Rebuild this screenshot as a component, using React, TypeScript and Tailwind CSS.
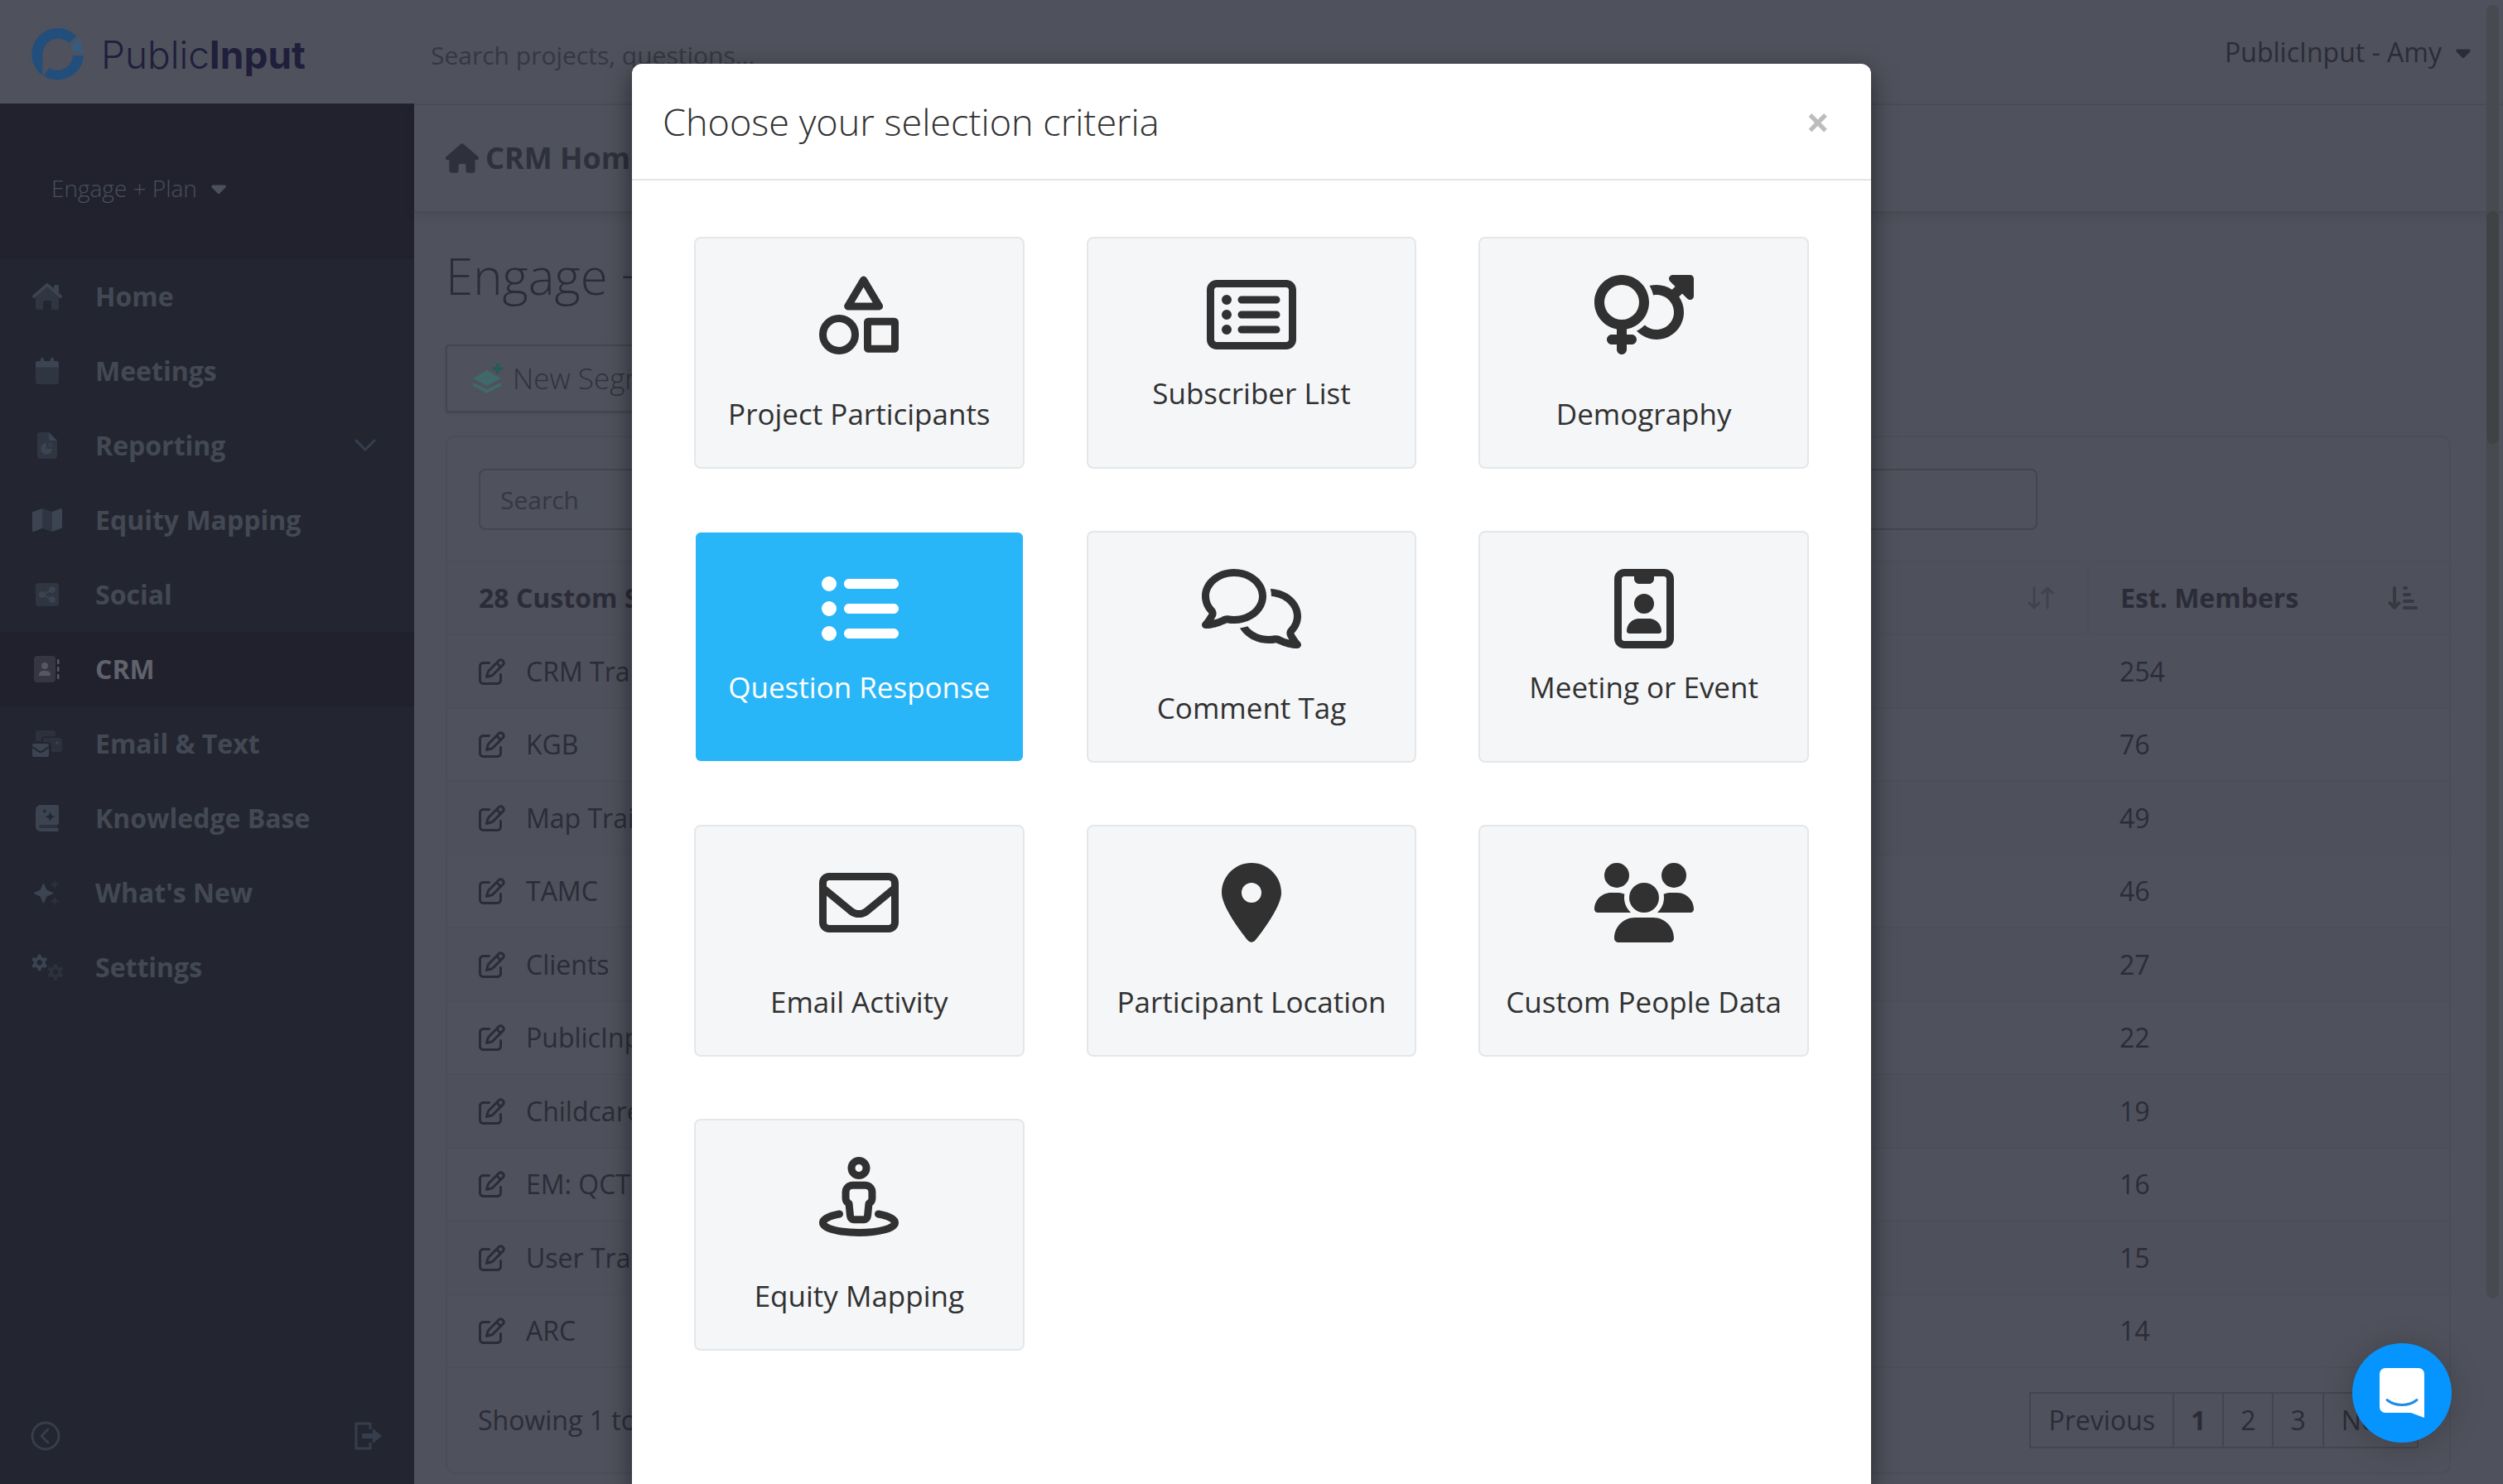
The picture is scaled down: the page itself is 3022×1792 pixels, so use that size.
import type { ReactNode } from "react";
import clsx from "clsx";
import {
    FaArrowDownShortWide,
    FaCaretDown,
    FaHouse,
    FaListUl,
    FaLocationDot,
    FaRegComments,
    FaRegEnvelope,
    FaRegIdBadge,
    FaRegPenToSquare,
    FaRegRectangleList,
    FaUsers,
    FaVenusMars,
} from "react-icons/fa6";

// two-tone icons, the muted tone is the half opacity part
function Duo({ width, children }: { width: number; children: ReactNode }) {
    return (
        <svg viewBox={`0 0 ${width} 512`} height={32} fill="currentColor" aria-hidden="true">
            {children}
        </svg>
    );
}

const HomeIcon = (
    <Duo width={576}>
        <path opacity=".5" d="M64 270 288 74l224 196v210a32 32 0 0 1-32 32H368V368a32 32 0 0 0-32-32h-96a32 32 0 0 0-32 32v144H96a32 32 0 0 1-32-32z" />
        <path d="M267 8a32 32 0 0 1 42 0l107 93V64a32 32 0 0 1 32-32h32a32 32 0 0 1 32 32v121l53 47a32 32 0 0 1-42 48L288 75 53 280a32 32 0 0 1-42-48z" />
    </Duo>
);

const MeetingsIcon = (
    <Duo width={448}>
        <path opacity=".5" d="M0 176h448v288a48 48 0 0 1-48 48H48a48 48 0 0 1-48-48z" />
        <path d="M96 32a32 32 0 0 1 64 0v32h128V32a32 32 0 0 1 64 0v32h48a48 48 0 0 1 48 48v72H0v-72a48 48 0 0 1 48-48h48z" />
    </Duo>
);

const ReportingIcon = (
    <Duo width={384}>
        <path opacity=".5" d="M64 0h160v128a32 32 0 0 0 32 32h128v288a64 64 0 0 1-64 64H64a64 64 0 0 1-64-64V64A64 64 0 0 1 64 0z" />
        <path d="M224 0 384 160H256a32 32 0 0 1-32-32zM176 208v112h112a112 112 0 1 1-112-112z" />
        <path opacity=".5" d="M208 192a96 96 0 0 1 96 96h-96z" />
    </Duo>
);

const MapIcon = (
    <Duo width={576}>
        <path opacity=".5" d="m192 32 192 64v384l-192-64z" />
        <path d="M0 117a24 24 0 0 1 15-22L192 32v384L32 479a24 24 0 0 1-32-22zM384 96l160-63a24 24 0 0 1 32 22v340a24 24 0 0 1-15 22l-177 63z" />
    </Duo>
);

const SocialIcon = (
    <Duo width={448}>
        <rect opacity=".5" y="32" width="448" height="448" rx="64" />
        <path d="M320 96a64 64 0 1 1-48 106l-82 41a64 64 0 0 1 0 26l82 41a64 64 0 1 1-14 29l-83-42a64 64 0 1 1 0-82l83-42A64 64 0 0 1 320 96z" />
    </Duo>
);

const CrmIcon = (
    <Duo width={512}>
        <rect opacity=".4" width="416" height="512" rx="64" />
        <circle cx="208" cy="192" r="64" />
        <path d="M96 384a80 80 0 0 1 80-96h64a80 80 0 0 1 80 96z" />
        <rect x="448" y="64" width="40" height="96" rx="16" />
        <rect x="448" y="208" width="40" height="96" rx="16" />
        <rect x="448" y="352" width="40" height="96" rx="16" />
    </Duo>
);

const EmailIcon = (
    <Duo width={576}>
        <path opacity=".4" d="M96 0h320a32 32 0 0 1 32 32v80H240a64 64 0 0 0-64 64v32H64V32A32 32 0 0 1 96 0zM240 144h288a48 48 0 0 1 48 48v176a48 48 0 0 1-48 48H368V288a64 64 0 0 0-64-64h-96v-48a32 32 0 0 1 32-32z" />
        <circle cx="480" cy="240" r="28" />
        <path d="M0 288a32 32 0 0 1 32-32h256a32 32 0 0 1 32 32v14L178 395a32 32 0 0 1-36 0L0 302zM0 340l124 82a64 64 0 0 0 72 0l124-82v140a32 32 0 0 1-32 32H32a32 32 0 0 1-32-32z" />
    </Duo>
);

const KnowledgeIcon = (
    <Duo width={448}>
        <path opacity=".4" d="M64 384h352v64H64z" />
        <path fillRule="evenodd" d="M96 0h320a32 32 0 0 1 32 32v320a32 32 0 0 1-32 32H96a32 32 0 0 0 0 64h320a32 32 0 0 1 0 64H96a96 96 0 0 1-96-96V96A96 96 0 0 1 96 0zm184 128-26 70-70 26 70 26 26 70 26-70 70-26-70-26zM176 72l-14 34-34 14 34 14 14 34 14-34 34-14-34-14z" />
    </Duo>
);

const WhatsNewIcon = (
    <Duo width={512}>
        <path d="m192 80 55 121 121 55a12 12 0 0 1 0 18l-121 55-55 121a12 12 0 0 1-18 0l-55-121L0 274a12 12 0 0 1 0-18l121-55 53-121a12 12 0 0 1 18 0z" />
        <path opacity=".4" d="m400 0 25 71 71 25-71 25-25 71-25-71-71-25 71-25zM400 320l25 71 71 25-71 25-25 71-25-71-71-25 71-25z" />
    </Duo>
);

const gear = "M-28-150h56l10 48 36 21 47-16 28 49-37 32v42l37 32-28 49-47-16-36 21-10 48h-56l-10-48-36-21-47 16-28-49 37-32v-42l-37-32 28-49 47 16 36-21zM0-50a54 54 0 1 0 .1 0z";

const SettingsIcon = (
    <Duo width={640}>
        <path fillRule="evenodd" transform="translate(170 160)" d={gear} />
        <path opacity=".4" fillRule="evenodd" transform="translate(480 345)" d={gear} />
    </Duo>
);

const navItems = [
    { label: "Home", icon: HomeIcon },
    { label: "Meetings", icon: MeetingsIcon },
    { label: "Reporting", icon: ReportingIcon, expandable: true },
    { label: "Equity Mapping", icon: MapIcon },
    { label: "Social", icon: SocialIcon },
    { label: "CRM", icon: CrmIcon, active: true },
    { label: "Email & Text", icon: EmailIcon },
    { label: "Knowledge Base", icon: KnowledgeIcon },
    { label: "What's New", icon: WhatsNewIcon },
    { label: "Settings", icon: SettingsIcon },
];

const segments = [
    { name: "CRM Training", members: 254 },
    { name: "KGB", members: 76 },
    { name: "Map Training", members: 49 },
    { name: "TAMC", members: 46 },
    { name: "Clients", members: 27 },
    { name: "PublicInput", members: 22 },
    { name: "Childcare", members: 19 },
    { name: "EM: QCT", members: 16 },
    { name: "User Training", members: 15 },
    { name: "ARC", members: 14 },
];

function ShapesIcon() {
    return (
        <svg viewBox="0 0 512 512" width={96} height={96} fill="none" stroke="currentColor" strokeWidth="48" strokeLinejoin="round" aria-hidden="true">
            <path d="M286 32 185 202h202z" />
            <circle cx="128" cy="384" r="104" />
            <rect x="312" y="300" width="176" height="176" rx="4" />
        </svg>
    );
}

function StreetViewIcon() {
    return (
        <svg viewBox="0 0 512 512" width={96} height={96} fill="none" stroke="currentColor" strokeWidth="48" strokeLinecap="round" strokeLinejoin="round" aria-hidden="true">
            <circle cx="256" cy="72" r="48" />
            <path d="M216 182h80c25 0 45 20 45 45v40c0 15-8 27-21 33l-8 80c-1 13-12 24-25 24h-62c-13 0-24-11-25-24l-8-80c-13-6-21-18-21-33v-40c0-25 20-45 45-45z" />
            <path d="M131 368C66 380 24 400 24 424c0 36 104 64 232 64s232-28 232-64c0-24-42-44-107-56" />
        </svg>
    );
}

const criteria = [
    { label: "Project Participants", icon: <ShapesIcon />, spaced: true },
    { label: "Subscriber List", icon: <FaRegRectangleList className="h-24 w-27" /> },
    { label: "Demography", icon: <FaVenusMars className="h-24 w-30" />, spaced: true },
    { label: "Question Response", icon: <FaListUl className="size-24" />, selected: true },
    { label: "Comment Tag", icon: <FaRegComments className="h-24 w-30" />, spaced: true },
    { label: "Meeting or Event", icon: <FaRegIdBadge className="size-24" /> },
    { label: "Email Activity", icon: <FaRegEnvelope className="size-24" />, spaced: true },
    { label: "Participant Location", icon: <FaLocationDot className="size-24" />, spaced: true },
    { label: "Custom People Data", icon: <FaUsers className="h-24 w-30" />, spaced: true },
    { label: "Equity Mapping", icon: <StreetViewIcon />, spaced: true },
];

function Logo() {
    return (
        <a href="#" className="flex w-[500px] items-center gap-[21px] pt-1.5 pl-[38px]">
            <svg viewBox="0 0 63 63" width={63} height={63} aria-hidden="true">
                <path fill="#224e7c" d="M54.300 9.500 45.600 18A19 19 0 0 0 13.300 31.500V57A31.500 31.500 0 1 1 54.300 9.500z" />
                <path fill="#224e7c" d="M63 33.200A31.500 31.500 0 0 1 14.600 57.500l7-9.700 3.400 2A19 19 0 0 0 50 33.200z" />
                <path fill="#3a5a7c" d="M56.300 12A31.500 31.500 0 0 1 63 29.800H50a19 19 0 0 0-2.400-10z" />
            </svg>
            <span className="font-[Inter,sans-serif] text-[46px] leading-none text-[#1f1f3b]">
                <span className="font-light">Public</span>
                <span className="font-bold">Input</span>
            </span>
        </a>
    );
}

function TopBar() {
    return (
        <header className="flex h-[127px] shrink-0 items-center border-b-2 border-[#4a4c57]">
            <Logo />
            <input
                type="text"
                aria-label="Search projects"
                placeholder="Search projects, questions..."
                className="mt-2 ml-5 w-[700px] bg-transparent text-[30px] outline-none placeholder:text-[#363743]"
            />
            <button type="button" className="mr-[34px] ml-auto flex items-center gap-3 text-[32px]">
                PublicInput - Amy
                <FaCaretDown size={28} />
            </button>
        </header>
    );
}

function Sidebar() {
    return (
        <aside className="-mt-0.5 flex w-[500px] shrink-0 flex-col bg-[#232631]">
            <div className="flex h-[188px] items-center bg-[#21222e] pt-4 pl-[62px]">
                <button type="button" className="flex items-center gap-3 text-[28px] font-light text-[#4a505c]">
                    Engage + Plan
                    <FaCaretDown size={28} />
                </button>
            </div>
            <nav>
                {navItems.map((item) => (
                    <a
                        key={item.label}
                        href="#"
                        className={clsx(
                            "flex h-[90px] items-center gap-[38px] pr-[46px] pl-[37px] text-[32px] font-bold",
                            item.active ? "bg-[#20212d] text-[#60626b]" : "text-[#434954]"
                        )}
                    >
                        <span className={clsx("flex w-10 justify-center", item.active ? "text-[#555761]" : "text-[#3c4451]")}>
                            {item.icon}
                        </span>
                        {item.label}
                        {item.expandable && (
                            <svg viewBox="0 0 26 16" width={26} height={16} className="ml-auto text-[#363f50]" fill="none" stroke="currentColor" strokeWidth="3" strokeLinecap="round" strokeLinejoin="round" aria-hidden="true">
                                <path d="m2 2 11 11L24 2" />
                            </svg>
                        )}
                    </a>
                ))}
            </nav>
            <div className="mt-auto flex justify-between pr-[39px] pb-10 pl-[37px] text-[#363d4c]">
                <button type="button" aria-label="Collapse menu">
                    <svg viewBox="0 0 36 36" width={36} height={36} fill="none" stroke="currentColor" strokeWidth="3" strokeLinecap="round" strokeLinejoin="round" aria-hidden="true">
                        <circle cx="18" cy="18" r="16" />
                        <path d="m21 10-8 8 8 8" />
                    </svg>
                </button>
                <button type="button" aria-label="Log out">
                    <svg viewBox="0 0 34 34" width={34} height={34} fill="none" stroke="currentColor" strokeWidth="3" strokeLinejoin="round" aria-hidden="true">
                        <path d="M20 9V2H3v30h17v-7" />
                        <path d="M10 14h13V8l11 9-11 9v-6H10z" fill="currentColor" stroke="none" />
                    </svg>
                </button>
            </div>
        </aside>
    );
}

function SegmentTable() {
    return (
        <table className="w-full table-fixed border-collapse text-left">
            <thead>
                <tr className="h-[88px] border-y-2 border-[#4c4e59] bg-[#4e505b]">
                    <th className="border-r-2 border-[#4c4e59] pr-10 pl-[38px] font-bold">
                        <div className="flex items-center justify-between">
                            28 Custom Segments
                            <svg viewBox="0 0 32 28" width={32} height={28} className="text-[#40424d]" fill="none" stroke="currentColor" strokeWidth="3" strokeLinecap="round" strokeLinejoin="round" aria-hidden="true">
                                <path d="M8 2v24M2 20l6 6 6-6M24 26V2M18 8l6-6 6 6" />
                            </svg>
                        </div>
                    </th>
                    <th className="w-[436px] px-[38px] font-bold">
                        <div className="flex items-center justify-between">
                            Est. Members
                            <FaArrowDownShortWide size={36} className="text-[#363842]" />
                        </div>
                    </th>
                </tr>
            </thead>
            <tbody>
                {segments.map((segment) => (
                    <tr key={segment.name} className="border-b-2 border-[#4c4e59] odd:h-[89px] odd:bg-[#4e505b] even:h-[88px]">
                        <td className="pl-[38px]">
                            <a href="#" className="flex items-center gap-[25px]">
                                <FaRegPenToSquare size={32} />
                                {segment.name}
                            </a>
                        </td>
                        <td className="pl-[38px]">{segment.members}</td>
                    </tr>
                ))}
            </tbody>
        </table>
    );
}

function Pagination() {
    return (
        <div className="flex divide-x-2 divide-[#43454f] border-2 border-[#43454f]">
            <button type="button" className="h-16 px-[21px]">Previous</button>
            <button type="button" className="h-16 px-[20px] font-bold">1</button>
            <button type="button" className="h-16 px-[20px]">2</button>
            <button type="button" className="h-16 px-[20px]">3</button>
            <button type="button" className="h-16 px-[21px]">Next</button>
        </div>
    );
}

function Content() {
    return (
        <main className="min-w-0 flex-1">
            <div className="flex h-[130px] items-center gap-2 border-b-2 border-[#484a54] pl-[38px] text-[36px] font-bold text-[#2e303b] shadow-[0_4px_12px_rgba(0,0,0,0.08)]">
                <FaHouse size={40} />
                CRM Home
            </div>
            <div className="pr-[63px] pl-[38px]">
                <h1 className="mt-[34px] text-[60px] leading-[84px] font-light">Engage + Plan</h1>
                <button type="button" className="mt-[41px] flex h-[82px] items-center gap-3 rounded-sm border-2 border-[#43454f] px-[31px] text-[35px] font-light text-[#30323d] shadow-sm">
                    <svg viewBox="0 0 36 36" width={36} height={36} aria-hidden="true">
                        <path fill="#41686a" d="m17 8 17 10-17 9-17-9z" />
                        <path fill="#41686a" d="m0 23 17 8 17-8v4l-17 9-17-9z" />
                        <path fill="#265a5a" d="M28 0h4v4h4v4h-4v4h-4V8h-4V4h4z" />
                    </svg>
                    New Segment
                </button>
                <section className="mt-[28px] rounded-xl border-2 border-[#4b4d58]">
                    <div className="px-[38px] pt-[38px] pb-[37px]">
                        <input
                            type="text"
                            aria-label="Search segments"
                            placeholder="Search"
                            className="h-[74px] w-[1882px] max-w-full rounded-lg border-2 border-[#43454f] bg-transparent px-6 text-[30px] outline-none placeholder:text-[#363743]"
                        />
                    </div>
                    <SegmentTable />
                    <div className="flex h-[126px] items-center justify-between px-[37px]">
                        <span>Showing 1 to 10 of 28</span>
                        <Pagination />
                    </div>
                </section>
            </div>
        </main>
    );
}

function CriteriaModal() {
    return (
        <div role="dialog" aria-labelledby="criteria-title" className="mt-[77px] w-full max-w-[1496px] rounded-t-xl bg-white text-[#313131] shadow-[0_10px_30px_rgba(0,0,0,0.5)]">
            <div className="flex h-[141px] items-center justify-between border-b-2 border-[#e4e5e6] pr-[50px] pl-[37px]">
                <h2 id="criteria-title" className="text-[45px] font-light">Choose your selection criteria</h2>
                <button type="button" aria-label="Close" className="text-[50px] leading-none font-bold text-[#bcbcbc]">×</button>
            </div>
            <div className="grid grid-cols-3 gap-[75px] px-[75px] pt-[68px] pb-[75px]">
                {criteria.map((item) => (
                    <button
                        key={item.label}
                        type="button"
                        className={clsx(
                            "flex h-[280px] flex-col items-center rounded-lg border-2 pt-11 text-[35px] leading-[50px] whitespace-nowrap",
                            item.selected ? "border-white bg-[#29b6f8] text-white" : "border-[#e4e7e9] bg-[#f4f6f8]",
                            item.spaced ? "gap-[47px]" : "gap-[22px]"
                        )}
                    >
                        {item.icon}
                        {item.label}
                    </button>
                ))}
            </div>
        </div>
    );
}

function ChatLauncher() {
    return (
        <button type="button" aria-label="Open chat" className="absolute right-[62px] bottom-[50px] flex size-[120px] items-center justify-center rounded-full bg-[#0695ff] shadow-[0_4px_40px_rgba(0,0,0,0.2)]">
            <svg viewBox="0 0 54 60" width={54} height={60} aria-hidden="true">
                <path fill="#fff" d="M7 0h40a7 7 0 0 1 7 7v53l-16-6H7a7 7 0 0 1-7-7V7a7 7 0 0 1 7-7z" />
                <path fill="none" stroke="#1f8ee8" strokeWidth="3" strokeLinecap="round" d="M9 38.500c10 8 26 8 36 0" />
            </svg>
        </button>
    );
}

export default function App() {
    return (
        <div className="relative flex h-screen flex-col overflow-hidden bg-[#4f515c] font-['Open_Sans',sans-serif] text-[32px] text-[#2b2c38]">
            <TopBar />
            <div className="flex min-h-0 flex-1">
                <Sidebar />
                <Content />
            </div>
            <div className="absolute top-1.5 right-[5px] h-[1562px] w-[15px] rounded-full bg-[#484a4f]" />
            <div className="absolute top-[255px] right-[5px] h-[281px] w-[15px] rounded-full bg-[#404246]" />
            <div className="absolute inset-0 flex justify-center">
                <CriteriaModal />
            </div>
            <ChatLauncher />
        </div>
    );
}
